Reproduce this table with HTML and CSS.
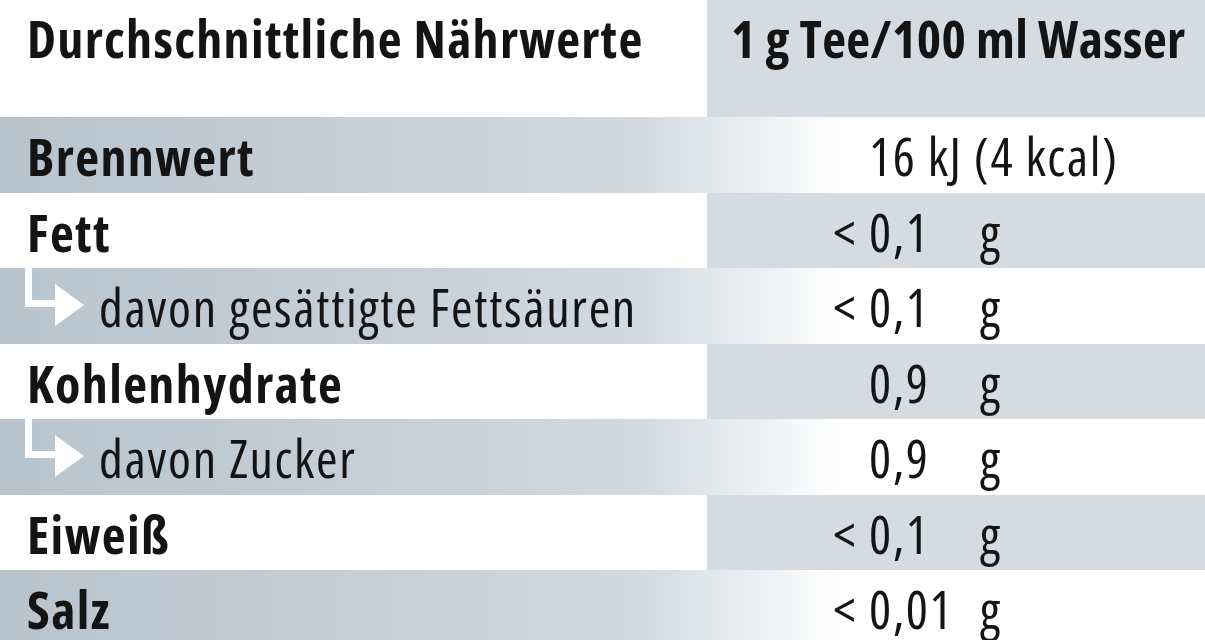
FILE: index.html
```html
<!DOCTYPE html>
<html lang="de">
<head>
<meta charset="utf-8">
<title>Nährwerte</title>
<link rel="stylesheet" href="styles.css">
</head>
<body>
<div class="table">
  <div class="row head">
    <div class="label">Durchschnittliche Nährwerte</div>
    <div class="value col">1 g Tee/100 ml Wasser</div>
  </div>
  <div class="row grad">
    <div class="label">Brennwert</div>
    <div class="value"><span class="pre"></span><span class="num">16 kJ (4 kcal)</span></div>
  </div>
  <div class="row plain">
    <div class="label">Fett</div>
    <div class="value col"><span class="pre">&lt;</span><span class="num">0,1</span><span class="unit">g</span></div>
  </div>
  <div class="row grad">
    <div class="label sub"><svg class="arrow" width="60" height="60" viewBox="0 0 60 60"><path d="M4.5 0V35.5H33" fill="none" stroke="#fff" stroke-width="7"/><path d="M31 16L60 37L31 58Z" fill="#fff"/></svg><span>davon gesättigte Fettsäuren</span></div>
    <div class="value"><span class="pre">&lt;</span><span class="num">0,1</span><span class="unit">g</span></div>
  </div>
  <div class="row plain">
    <div class="label">Kohlenhydrate</div>
    <div class="value col"><span class="pre"></span><span class="num">0,9</span><span class="unit">g</span></div>
  </div>
  <div class="row grad">
    <div class="label sub"><svg class="arrow" width="60" height="60" viewBox="0 0 60 60"><path d="M4.5 0V35.5H33" fill="none" stroke="#fff" stroke-width="7"/><path d="M31 16L60 37L31 58Z" fill="#fff"/></svg><span>davon Zucker</span></div>
    <div class="value"><span class="pre"></span><span class="num">0,9</span><span class="unit">g</span></div>
  </div>
  <div class="row plain">
    <div class="label">Eiweiß</div>
    <div class="value col"><span class="pre">&lt;</span><span class="num">0,1</span><span class="unit">g</span></div>
  </div>
  <div class="row grad">
    <div class="label">Salz</div>
    <div class="value"><span class="pre">&lt;</span><span class="num">0,01</span><span class="unit">g</span></div>
  </div>
</div>
</body>
</html>
```
FILE: styles.css
```css
html, body {
  margin: 0;
  padding: 0;
  background: #fff;
}
body {
  width: 1205px;
  height: 640px;
  overflow: hidden;
  font-family: "Open Sans", "Roboto", sans-serif;
  font-stretch: 75%;
  color: #141414;
}
.table {
  display: flex;
  flex-direction: column;
}
.row {
  display: grid;
  grid-template-columns: 707px 1fr;
  height: 75.5px;
  flex: none;
}
.row.head {
  height: 117px;
}
.row.grad {
  background: linear-gradient(to right, #b7c4ce 0px, #c6d0d8 400px, #d2dae0 640px, #e6ebee 730px, #ffffff 840px);
}
.col {
  background: #d4dce2;
}
.label {
  display: flex;
  align-items: center;
  padding-left: 27px;
  padding-top: 2px;
  font-weight: 700;
  font-size: 52px;
  letter-spacing: 1.4px;
  white-space: nowrap;
}
.head .label,
.head .value {
  display: flex;
  align-items: flex-start;
  padding-top: 2px;
  font-weight: 700;
  font-size: 52px;
  white-space: nowrap;
}
.head .label {
  letter-spacing: 1.3px;
}
.head .value {
  padding-left: 24px;
  letter-spacing: 0.4px;
}
.label.sub {
  position: relative;
  font-weight: 400;
  letter-spacing: 1.7px;
  padding-left: 99px;
}
.arrow {
  position: absolute;
  left: 24px;
  top: 0;
}
.value {
  display: flex;
  align-items: center;
  position: relative;
  padding-top: 2px;
  font-size: 52px;
  font-weight: 400;
  letter-spacing: 1.6px;
  white-space: nowrap;
}
.value .pre {
  width: 150px;
  text-align: right;
}
.value .num {
  padding-left: 12px;
}
.value .unit {
  position: absolute;
  left: 273px;
}
```
